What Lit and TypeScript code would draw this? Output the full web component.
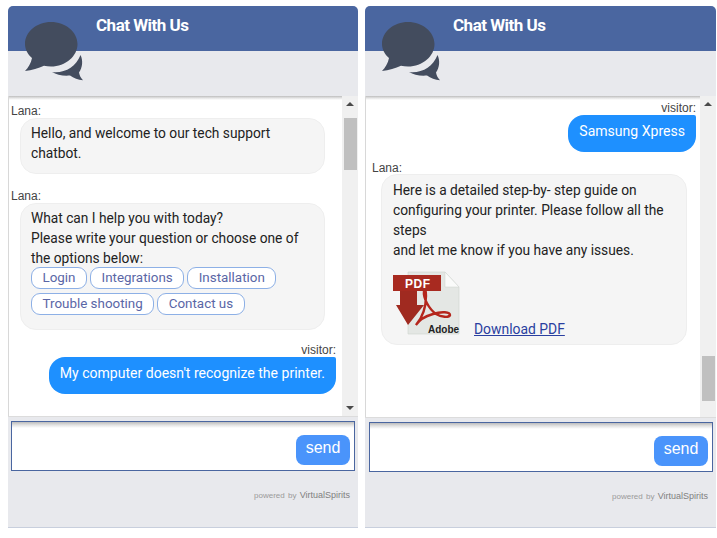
import { LitElement, html, css, svg } from "lit";
import { customElement } from "lit/decorators.js";

const chatIcon = svg`<svg class="chat-icon" viewBox="20 18 70 67" width="70" height="67" aria-hidden="true">
  <path fill="#434c5e" d="M51 22c14.500 0 26.500 9.800 26.500 22 0 12.200-11.800 22.500-26.500 22.500-2.400 0-4.700-.3-7-.8C38.500 68 32 70.500 25 71c3.500-3.500 6-8 7-13-4.500-3.800-7-8.800-7-14 0-12.200 11.600-22 26-22z"/>
  <path fill="#434c5e" d="M80.500 55c2.600 5 2.200 12.500-1.500 17.500.4 2.800 2 5.700 4 7.800-4.700-.5-9.400-2.200-13-4.800-6.500.6-13.500-.5-18-3.500 12.500 1.500 24-5 28.500-17z"/>
</svg>`;

const pdfIcon = svg`<svg class="pdf-icon" viewBox="0 0 67 65" width="67" height="65" role="img" aria-label="PDF">
  <path fill="#e4e7e4" stroke="#cfd3cf" stroke-width=".6" d="M15 1h37l14 15v47H15z"/>
  <path fill="#fafbfa" stroke="#cfd3cf" stroke-width=".5" d="M52 1v15h14z"/>
  <path fill="none" stroke="#b5261c" stroke-width="2.400" d="M23 54c6-7 10-18 10-29 0-6-1-8-2-5-1 7 5 18 12 23 5 3 13 4 14 1 0-3-8-4-17-1-7 2-14 6-17 11z"/>
  <rect x="0" y="4" width="48" height="16" fill="#a82a20"/>
  <text x="12" y="17" class="pdf-label">PDF</text>
  <path fill="#a02a20" d="M7 20h17v14h7L15 54 3 34h4z"/>
  <text x="35" y="62" class="adobe-label">Adobe</text>
</svg>`;

@customElement("app-root")
export class AppRoot extends LitElement {
  static styles = css`
    :host {
      display: block;
      width: 717px;
      height: 538px;
      background: #fff;
      font-family: Roboto, "Liberation Sans", sans-serif;
    }
    .page {
      display: flex;
      gap: 7px;
      padding: 6px 0 0 8px;
    }
    .panel {
      position: relative;
      flex: none;
      width: 350px;
      height: 522px;
      box-sizing: border-box;
      display: flex;
      flex-direction: column;
      background: #e8e9ed;
      border-bottom: 1px solid #c8cfdd;
      border-radius: 5px 5px 0 0;
      overflow: hidden;
    }
    .panel.second {
      width: 351px;
    }
    .header {
      flex: none;
      height: 45px;
      box-sizing: border-box;
      padding: 8px 0 0 88px;
      background: #4a66a0;
      color: #fff;
      font-size: 17px;
      font-weight: 700;
      letter-spacing: -0.5px;
      line-height: 22px;
    }
    .band {
      flex: none;
      height: 45px;
    }
    .chat-icon {
      position: absolute;
      left: 12px;
      top: 12px;
    }
    .chat {
      flex: none;
      height: 320px;
      display: flex;
      background: #fff;
      border-bottom: 1px solid #dcdcdc;
    }
    .second .chat {
      height: 321px;
    }
    .messages {
      flex: 1;
      min-width: 0;
      box-sizing: border-box;
      padding: 8px 6px 0 2px;
      display: flex;
      flex-direction: column;
      background: linear-gradient(#bdbdbd, #e4e4e4 2px, #fff 4px);
      border-left: 1px solid #d8d8d8;
    }
    .second .messages {
      padding-top: 5px;
      padding-right: 4px;
    }
    .label {
      font: 12px/14px "Liberation Sans", Arial, sans-serif;
      color: #444;
    }
    .label.right {
      text-align: right;
    }
    .bubble {
      box-sizing: border-box;
      width: 305px;
      margin: 0 0 0 9px;
      padding: 4px 10px 10px;
      background: #f5f5f5;
      border: 1px solid #eeeeee;
      border-radius: 16px;
      color: #222;
      font-size: 13.75px;
      line-height: 20px;
    }
    .bubble + .label {
      margin-top: 15px;
    }
    .options {
      display: flex;
      flex-wrap: wrap;
      gap: 4px 3px;
      margin: -1px 0 4px;
    }
    .option {
      box-sizing: border-box;
      height: 22px;
      padding: 0 10.500px;
      border: 1px solid #8db0e6;
      border-radius: 9px;
      background: #fff;
      color: #5a66a6;
      font-size: 13.400px;
      line-height: 20px;
    }
    .visitor {
      align-self: flex-end;
      box-sizing: border-box;
      height: 37px;
      padding: 0 11px;
      background: #1e90ff;
      border-radius: 16px 2px 16px 16px;
      color: #fff;
      font-size: 14.050px;
      line-height: 33px;
    }
    .bubble + .label.spaced {
      margin-top: 13px;
    }
    .label.after-visitor {
      margin: 9px 0 -1px 4px;
    }
    .second .bubble {
      width: 306px;
      margin-left: 13px;
      padding: 5px 10px 0 11px;
      height: 171px;
    }
    .pdf-row {
      display: flex;
      align-items: flex-end;
      gap: 14px;
      margin-top: 11px;
    }
    .pdf-label {
      font: 700 12px "Liberation Sans", Arial, sans-serif;
      fill: #fff;
      letter-spacing: 0.5px;
    }
    .adobe-label {
      font: 700 10px "Liberation Sans", Arial, sans-serif;
      fill: #222;
    }
    .pdf-link {
      color: #2a3fa0;
      font-size: 13.900px;
      line-height: 16px;
      text-decoration: underline;
      margin-bottom: -1px;
    }
    .scrollbar {
      flex: none;
      width: 16px;
      display: flex;
      flex-direction: column;
      align-items: center;
      background: #f0f0f0;
    }
    .arrow {
      flex: none;
      width: 0;
      height: 0;
      margin: 6px 0;
      border-left: 4px solid transparent;
      border-right: 4px solid transparent;
    }
    .arrow.up {
      border-bottom: 4px solid #4a4a4a;
    }
    .arrow.down {
      border-top: 4px solid #4a4a4a;
      margin-top: auto;
    }
    .thumb {
      flex: none;
      width: 13px;
      background: #c0c0c0;
    }
    .thumb.top {
      height: 52px;
      margin-top: 6px;
    }
    .thumb.bottom {
      height: 45px;
      margin-top: auto;
      margin-bottom: 16px;
    }
    .input-box {
      flex: none;
      margin: 4px 3px 0;
      height: 50px;
      box-sizing: border-box;
      display: flex;
      justify-content: flex-end;
      align-items: flex-start;
      padding: 13px 4px 0 0;
      background: linear-gradient(#bcbcbc, #e2e2e2 3px, #fff 6px);
      border: 1px solid #4a66a0;
    }
    .second .input-box {
      margin-left: 4px;
    }
    .send {
      width: 54px;
      height: 30px;
      border-radius: 8px;
      background: #4a94fb;
      color: #fff;
      font: 16px/25px "Liberation Sans", Arial, sans-serif;
      text-align: center;
    }
    .powered {
      margin: 19px 8px 0 0;
      text-align: right;
      font: 8px/11px "Liberation Sans", Arial, sans-serif;
      color: #9a9a9a;
      word-spacing: 1px;
    }
    .powered b {
      font-weight: 400;
      font-size: 9px;
      color: #808080;
    }
  `;

  private shell(content: unknown, scrollbar: unknown, second = false) {
    return html`<section class="panel ${second ? "second" : ""}">
      <div class="header">Chat With Us</div>
      <div class="band"></div>
      ${chatIcon}
      <div class="chat">
        <div class="messages">${content}</div>
        <div class="scrollbar">${scrollbar}</div>
      </div>
      <div class="input-box"><div class="send">send</div></div>
      <div class="powered">powered by <b>VirtualSpirits</b></div>
    </section>`;
  }

  render() {
    const options = ["Login", "Integrations", "Installation", "Trouble shooting", "Contact us"];
    const first = html`
      <div class="label">Lana:</div>
      <div class="bubble">Hello, and welcome to our tech support chatbot.</div>
      <div class="label">Lana:</div>
      <div class="bubble">
        What can I help you with today?<br />
        Please write your question or choose one of the options below:
        <div class="options">${options.map((o) => html`<span class="option">${o}</span>`)}</div>
      </div>
      <div class="label right spaced">visitor:</div>
      <div class="visitor">My computer doesn't recognize the printer.</div>
    `;
    const second = html`
      <div class="label right">visitor:</div>
      <div class="visitor">Samsung Xpress</div>
      <div class="label after-visitor">Lana:</div>
      <div class="bubble">
        Here is a detailed step-by- step guide on configuring your printer. Please follow all the steps<br />
        and let me know if you have any issues.
        <div class="pdf-row">${pdfIcon}<a class="pdf-link" href="#">Download PDF</a></div>
      </div>
    `;
    return html`<div class="page">
      ${this.shell(
        first,
        html`<span class="arrow up"></span><span class="thumb top"></span><span class="arrow down"></span>`
      )}
      ${this.shell(
        second,
        html`<span class="arrow up"></span><span class="thumb bottom"></span>`,
        true
      )}
    </div>`;
  }
}
